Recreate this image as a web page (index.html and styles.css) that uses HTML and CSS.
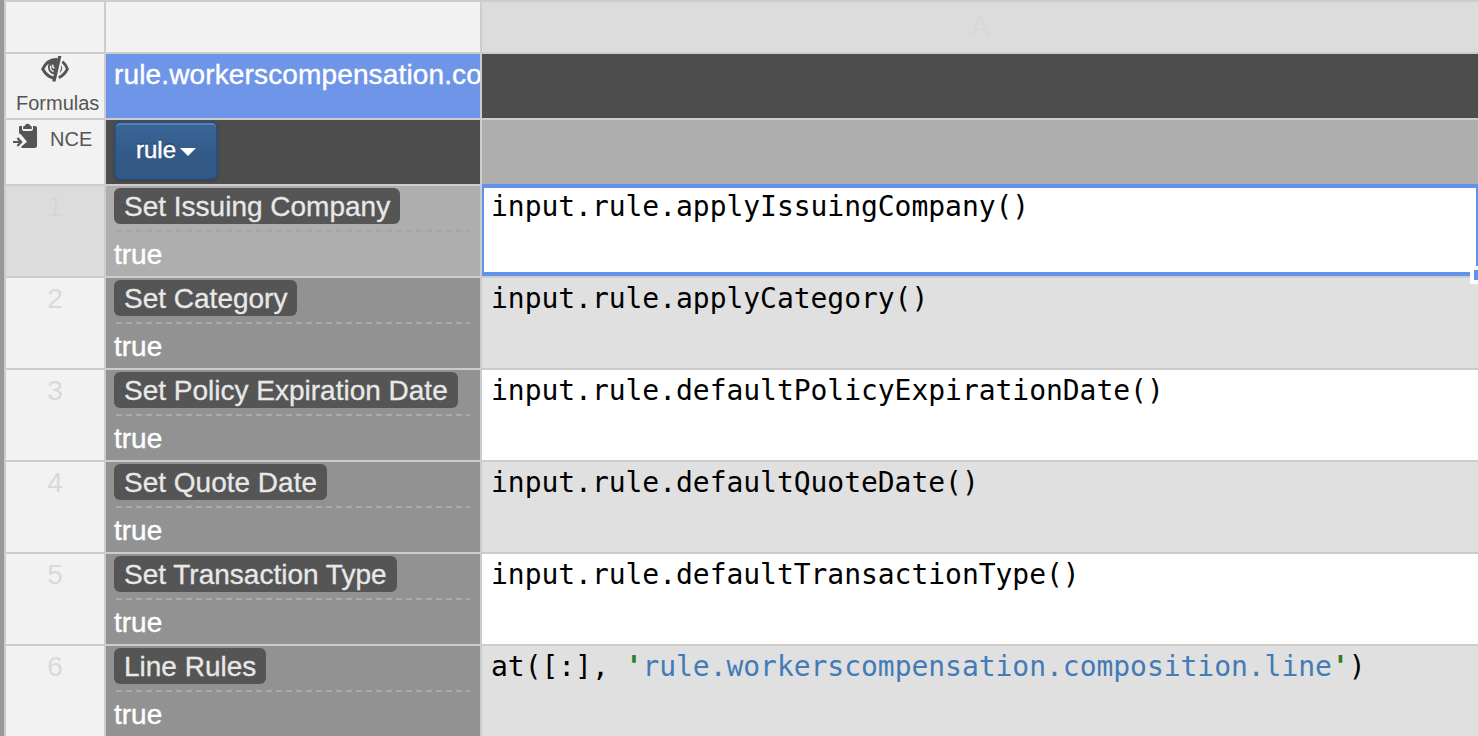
FILE: index.html
```html
<!DOCTYPE html>
<html lang="en">
<head>
<meta charset="utf-8">
<title>Rule table</title>
<link rel="stylesheet" href="styles.css">
</head>
<body>
<div class="sheet">
  <div class="cell head"></div>
  <div class="cell head"></div>
  <div class="cell colhead">A</div>

  <div class="cell head tool formulas">
    <svg class="eye" width="30" height="28" viewBox="0 0 30 28">
      <path fill="#555" fill-rule="evenodd" d="M18 3.2Q7 1.6 1 14Q5.6 23.2 13 24.4L13.7 21.5Q8 20 4.4 14Q6 10.6 8.6 8.4Q7.2 12 8.6 15.4Q10.6 19 14.3 19.2Z"/>
      <path fill="none" stroke="#f2f2f2" stroke-width="1.5" d="M10.6 10.6Q10 15.6 13.6 16.4M13 9.6Q11.8 12 14.4 13.2"/>
      <path fill="#555" d="M18.2 1H21.4L15.6 26.6H12.2Z"/>
      <path fill="none" stroke="#555" stroke-width="2.8" d="M22.4 6.6Q26 9.6 27.4 14Q24.4 20 18.8 22.8"/>
      <path fill="#555" d="M21.6 10Q23.4 14.6 19.8 18.2Z"/>
    </svg>
    <span>Formulas</span>
  </div>
  <div class="cell path">rule.workerscompensation.co</div>
  <div class="cell dark"></div>

  <div class="cell head tool nce">
    <svg width="26" height="26" viewBox="0 0 26 26">
      <path fill="#555" d="M7 3H9V6Q9 8 11 8H18Q20 8 20 6V3H22Q24 3 24 5V22.5Q24 25 21.5 25H9Q8 25 8.4 23.4L14 18.8L8 11.5Q6 11 6 9V4Q6 3 7 3Z"/>
      <path fill="#555" d="M10.2 6V4Q10.2 2.7 12 2.7Q12.2.8 14.6.8Q17 .8 17.2 2.7Q18.8 2.7 18.8 4V6Z"/>
      <path fill="none" stroke="#555" stroke-width="2" d="M0 19H8"/>
      <path fill="none" stroke="#555" stroke-width="2.2" d="M4.4 15L8.2 19L4.4 23"/>
    </svg>
    <span>NCE</span>
  </div>
  <div class="cell dark menu"><button class="btn">rule<i class="caret"></i></button></div>
  <div class="cell light"></div>

  <div class="cell num active">1</div>
  <div class="cell rule active"><span class="tag">Set Issuing Company</span><svg class="dash" width="355" height="2"><path d="M0 1H354"/></svg><span class="val">true</span></div>
  <div class="cell code selected">input.rule.applyIssuingCompany()<i class="handle"></i></div>

  <div class="cell num">2</div>
  <div class="cell rule"><span class="tag">Set Category</span><svg class="dash" width="355" height="2"><path d="M0 1H354"/></svg><span class="val">true</span></div>
  <div class="cell code even">input.rule.applyCategory()</div>

  <div class="cell num">3</div>
  <div class="cell rule"><span class="tag">Set Policy Expiration Date</span><svg class="dash" width="355" height="2"><path d="M0 1H354"/></svg><span class="val">true</span></div>
  <div class="cell code">input.rule.defaultPolicyExpirationDate()</div>

  <div class="cell num">4</div>
  <div class="cell rule"><span class="tag">Set Quote Date</span><svg class="dash" width="355" height="2"><path d="M0 1H354"/></svg><span class="val">true</span></div>
  <div class="cell code even">input.rule.defaultQuoteDate()</div>

  <div class="cell num">5</div>
  <div class="cell rule"><span class="tag">Set Transaction Type</span><svg class="dash" width="355" height="2"><path d="M0 1H354"/></svg><span class="val">true</span></div>
  <div class="cell code">input.rule.defaultTransactionType()</div>

  <div class="cell num">6</div>
  <div class="cell rule"><span class="tag">Line Rules</span><svg class="dash" width="355" height="2"><path d="M0 1H354"/></svg><span class="val">true</span></div>
  <div class="cell code even">at([:], <b class="quote">'</b><span class="link">rule.workerscompensation.composition.line</span><b class="quote">'</b>)</div>
</div>
</body>
</html>
```
FILE: styles.css
```css
* { box-sizing: border-box; }
body {
  margin: 0;
  overflow: hidden;
  font-family: "Liberation Sans", Arial, sans-serif;
  font-size: 28px;
  line-height: 42px;
}
.sheet {
  display: grid;
  grid-template-columns: 98px 374px 1fr;
  grid-template-rows: 50px 64px 64px repeat(6, 90px);
  gap: 2px;
  height: 736px;
  padding: 2px 0 0 2px;
  border-left: 4px solid #999;
  background: #ccc;
}
.cell { min-width: 0; overflow: hidden; white-space: pre; }
.head { background: #f2f2f2; }
.colhead { background: #dcdcdc; color: #d8d8d8; text-align: center; padding-top: 4px; }
.dark { background: #4d4d4d; }
.light { background: #aeaeae; }
.path {
  background: #6e95e8;
  color: #fff;
  padding-left: 8px;
  letter-spacing: .14px;
  -webkit-text-stroke: .4px #fff;
}
.tool { color: #555; font-size: 20px; line-height: 24px; }
.formulas { display: flex; flex-direction: column; align-items: flex-start; padding-left: 10px; }
.eye { display: block; margin-left: 24px; flex: none; margin-top: 1px; }
.formulas span { margin-top: 8px; }
.nce { display: flex; align-items: flex-start; gap: 11px; padding: 3px 0 0 7px; }
.nce span { padding-top: 4px; }
.menu { padding: 1px 8px 0; }
.btn {
  display: flex;
  align-items: center;
  gap: 4px;
  width: 104px;
  height: 59px;
  padding: 0 20px 1px;
  border: 2px solid #294f7a;
  border-radius: 6px;
  background: linear-gradient(#3a6699, #335a87 60%);
  box-shadow: inset 0 2px 0 #5a81ab, 0 1px 2px rgba(0, 0, 0, .25);
  color: #fff;
  font: 24px "Liberation Sans", Arial, sans-serif;
  text-shadow: 0 -2px 0 rgba(0, 0, 0, .25);
  -webkit-text-stroke: .4px #fff;
}
.caret { border: 8px solid transparent; border-top-color: #fff; border-bottom: 0; margin-top: 4px; }
.num { background: #f2f2f2; color: #d9d9d9; text-align: center; }
.num.active { background: #dcdcdc; color: #d6d6d6; }
.rule {
  display: flex;
  flex-direction: column;
  align-items: flex-start;
  padding: 2px 8px 0;
  background: #929292;
  color: #fff;
}
.rule.active { background: #aeaeae; }
.tag {
  height: 36px;
  padding: 0 10px;
  border-radius: 6px;
  background: #555;
  color: #e8e8e8;
  line-height: 38px;
  -webkit-text-stroke: .3px #e8e8e8;
}
.dash { display: block; margin: 6px 0 0 2px; stroke: #aaa; stroke-width: 2; stroke-dasharray: 6 4; }
.active .dash { stroke: #a6a6a6; }
.val { line-height: 36px; margin-top: 5px; -webkit-text-stroke: .4px #fff; }
.code {
  padding-left: 9px;
  background: #fff;
  color: #000;
  font-family: "DejaVu Sans Mono", monospace;
  letter-spacing: -.04px;
}
.code.even { background: #e0e0e0; }
.quote { color: #2f7d1c; font-weight: bold; }
.link { color: #437bb7; }
.selected {
  position: relative;
  overflow: visible;
  box-shadow: inset 2px 0 #6092ee, inset -2px 0 #6092ee, inset 0 2px #6092ee, inset 0 -4px #6092ee, 0 -2px #6092ee;
}
.selected .handle {
  position: absolute;
  right: 0;
  bottom: -8px;
  width: 8px;
  height: 18px;
  border: 4px solid #fff;
  border-right: 0;
  background: #6092ee;
}
```
